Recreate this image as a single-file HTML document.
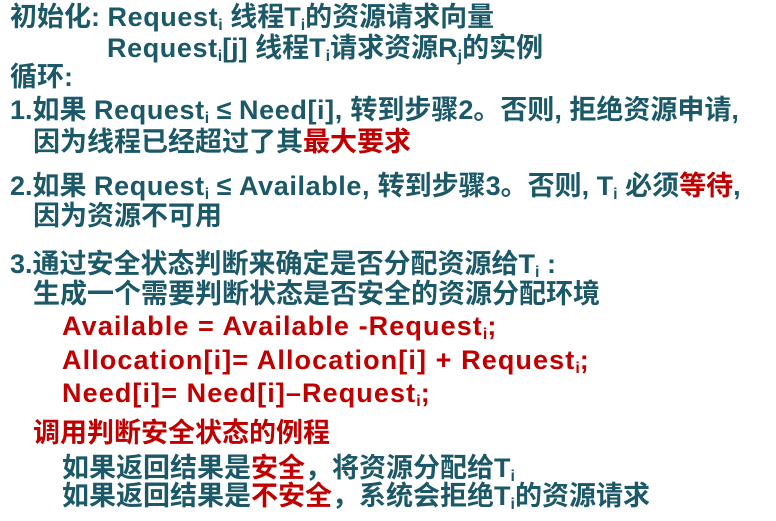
<!DOCTYPE html>
<html><head><meta charset="utf-8"><style>
body{margin:0;width:776px;height:521px;background:#fff;overflow:hidden;position:relative;font-family:"Liberation Sans","Noto Sans CJK SC",sans-serif;font-weight:bold;font-size:27px;color:#1b5868}
div{position:absolute;white-space:nowrap;line-height:32px}
.r{color:#c00000}
.l{letter-spacing:0.6px}
.c{letter-spacing:1.1px}
sub{font-size:16px;vertical-align:-4px;line-height:0;letter-spacing:0}
</style></head><body>
<div style="left:10px;top:1px">初始化: <span class="l">Request</span><sub>i</sub> 线程T<sub>i</sub>的资源请求向量</div>
<div style="left:107px;top:32px"><span class="l">Request</span><sub>i</sub>[j] 线程T<sub>i</sub>请求资源R<sub>j</sub>的实例</div>
<div style="left:10px;top:61px">循环:</div>
<div style="left:10px;top:94px">1.如果 <span class="l">Request</span><sub>i</sub> ≤ <span class="l">Need[i],</span> 转到步骤2。否则, 拒绝资源申请,</div>
<div style="left:33px;top:126px">因为线程已经超过了其<span class="r">最大要求</span></div>
<div style="left:10px;top:170px">2.如果 <span class="l">Request</span><sub>i</sub> ≤ <span class="l">Available,</span> 转到步骤3。否则, T<sub>i</sub> 必须<span class="r">等待</span>,</div>
<div style="left:33px;top:200px">因为资源不可用</div>
<div style="left:10px;top:248px">3.通过安全状态判断来确定是否分配资源给T<sub>i</sub> :</div>
<div style="left:33px;top:278px">生成一个需要判断状态是否安全的资源分配环境</div>
<div class="r c" style="left:62px;top:310px">Available = Available -Request<sub>i</sub>;</div>
<div class="r c" style="left:62px;top:344px">Allocation[i]= Allocation[i] + Request<sub>i</sub>;</div>
<div class="r c" style="left:62px;top:377px">Need[i]= Need[i]–Request<sub>i</sub>;</div>
<div class="r" style="left:33px;top:417px">调用判断安全状态的例程</div>
<div style="left:62px;top:452px">如果返回结果是<span class="r">安全</span>，将资源分配给T<sub>i</sub></div>
<div style="left:62px;top:480px">如果返回结果是<span class="r">不安全</span>，系统会拒绝T<sub>i</sub>的资源请求</div>
</body></html>
